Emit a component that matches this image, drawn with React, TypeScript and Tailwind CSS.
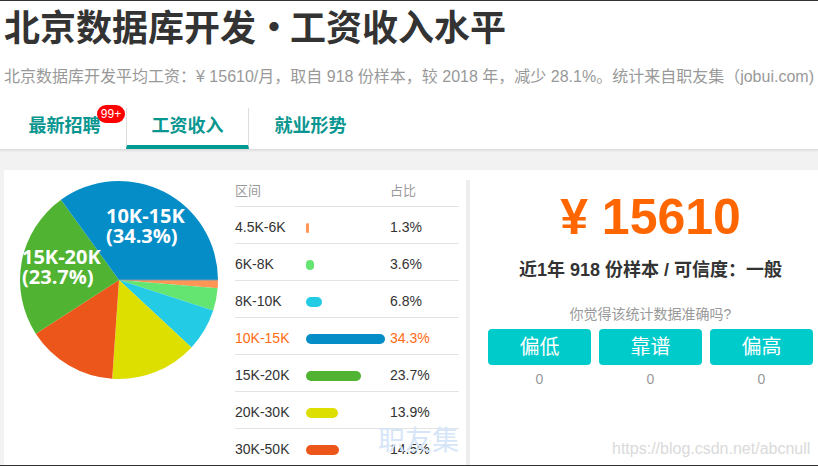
const slices = [
  { label: '4.5K-6K', pct: 1.3, color: '#ff9655' },
  { label: '6K-8K', pct: 3.6, color: '#64e572' },
  { label: '8K-10K', pct: 6.8, color: '#24cbe5' },
  { label: '20K-30K', pct: 13.9, color: '#dddf00' },
  { label: '30K-50K', pct: 14.5, color: '#ed561b' },
  { label: '15K-20K', pct: 23.7, color: '#50b432' },
  { label: '10K-15K', pct: 34.3, color: '#058dc7' },
];

const rows = [
  { label: '4.5K-6K', pct: 1.3, color: '#ff9655' },
  { label: '6K-8K', pct: 3.6, color: '#64e572' },
  { label: '8K-10K', pct: 6.8, color: '#24cbe5' },
  { label: '10K-15K', pct: 34.3, color: '#058dc7', hot: true },
  { label: '15K-20K', pct: 23.7, color: '#50b432' },
  { label: '20K-30K', pct: 13.9, color: '#dddf00' },
  { label: '30K-50K', pct: 14.5, color: '#ed561b' },
];

// 扇形パス（3時方向から時計回り）
function slicePath(start: number, end: number) {
  const r = 99;
  const c = 100;
  const a0 = (start * Math.PI) / 180;
  const a1 = (end * Math.PI) / 180;
  const x0 = c + r * Math.cos(a0);
  const y0 = c + r * Math.sin(a0);
  const x1 = c + r * Math.cos(a1);
  const y1 = c + r * Math.sin(a1);
  const large = end - start > 180 ? 1 : 0;
  return `M ${c} ${c} L ${x0} ${y0} A ${r} ${r} 0 ${large} 1 ${x1} ${y1} Z`;
}

function Pie() {
  const total = slices.reduce((s, d) => s + d.pct, 0);
  let acc = 0;
  return (
    <svg width="200" height="200" viewBox="0 0 200 200">
      {slices.map((d) => {
        const start = (acc / total) * 360;
        acc += d.pct;
        const end = (acc / total) * 360;
        return <path key={d.label} d={slicePath(start, end)} fill={d.color} />;
      })}
      <line x1="100" y1="100" x2="199" y2="100" stroke="#7f9aa8" strokeWidth="1" />
      <g
        fill="#ffffff"
        fontWeight="700"
        fontSize="20"
        fontFamily="'Open Sans', 'Noto Sans CJK SC', sans-serif"
      >
        <text x="87" y="43">10K-15K</text>
        <text x="87" y="63">(34.3%)</text>
        <text x="3" y="84">15K-20K</text>
        <text x="3" y="104">(23.7%)</text>
      </g>
    </svg>
  );
}

function SalaryTable() {
  return (
    <div className="w-[224px] mt-[10px] text-[14px]">
      <div className="flex h-[27px] items-center pb-[4px] border-b border-[#e3e3e3] text-[13px] text-[#999]">
        <span className="w-[155px]">区间</span>
        <span>占比</span>
      </div>
      {rows.map((r) => (
        <div
          key={r.label}
          className={`flex h-[37px] items-center pt-[5px] border-b border-[#e3e3e3] ${
            r.hot ? 'text-[#ff6a13]' : 'text-[#333]'
          }`}
        >
          <span className="w-[71px] whitespace-nowrap">{r.label}</span>
          <span className="w-[84px]">
            <span
              className="block h-[10px] rounded-full"
              style={{ width: Math.max(r.pct * 2.3, 3), background: r.color }}
            />
          </span>
          <span>{r.pct}%</span>
        </div>
      ))}
    </div>
  );
}

function Tab({ label, active, badge }: { label: string; active?: boolean; badge?: string }) {
  return (
    <div
      className={`relative w-[123px] h-[41px] text-center text-[18px] font-bold leading-[37px] text-[#0a9690] ${
        active ? 'border-x border-[#dddddd] border-b-4 border-b-[#009a93]' : ''
      }`}
    >
      {label}
      {badge && (
        <span className="absolute left-[94px] top-[-3px] flex h-[18px] w-[28px] items-center justify-center rounded-full bg-[#ff0000] text-[12px] font-normal leading-none text-white">
          {badge}
        </span>
      )}
    </div>
  );
}

function Vote({ label }: { label: string }) {
  return (
    <div className="flex w-[103px] flex-col items-center">
      <button className="h-[36px] w-full rounded-[4px] bg-[#00cbcb] text-[20px] text-white">
        {label}
      </button>
      <span className="mt-[4px] text-[14px] leading-[20px] text-[#999]">0</span>
    </div>
  );
}

export default function App() {
  return (
    <div className="relative h-[466px] w-[818px] overflow-hidden border-y border-[#333] bg-[#f2f2f2] font-['Liberation_Sans','Noto_Sans_CJK_SC',sans-serif]">
      <div className="bg-white border-b border-[#dddddd] shadow-[0_1px_2px_rgba(0,0,0,0.08)]">
        <h1 className="pl-[4px] text-[36px] font-bold leading-[48px] text-[#333] whitespace-nowrap font-['Noto_Sans_CJK_SC',sans-serif]">
          北京数据库开发<span className="inline-block w-[34px] text-center">•</span>工资收入水平
        </h1>
        <p className="mt-[16px] pl-[4px] text-[16px] leading-[24px] text-[#999] whitespace-nowrap">
          北京数据库开发平均工资：¥ 15610/月，取自 918 份样本，较 2018 年，减少 28.1%。统计来自职友集（jobui.com)
        </p>
        <div className="mt-[19px] flex pl-[3px]">
          <Tab label="最新招聘" badge="99+" />
          <Tab label="工资收入" active />
          <Tab label="就业形势" />
        </div>
      </div>

      <div className="ml-[4px] mt-[20px] flex bg-white h-[300px]">
        <div className="relative flex w-[462px]">
          <div className="w-[231px] pl-[15px] pt-[10px]">
            <Pie />
          </div>
          <SalaryTable />
          <span className="absolute left-[374px] top-[255px] text-[27px] leading-none text-[#d6e6f8] font-['Noto_Sans_CJK_SC',sans-serif]">
            职友集
          </span>
        </div>
        <div className="mt-[10px] flex-1 border-l-4 border-[#eeeeee] pl-[18px] pr-[5px]">
          <div className="pt-[7px] text-center text-[50px] font-bold leading-[60px] text-[#ff6600]">
            ¥ 15610
          </div>
          <div className="mt-[11px] text-center text-[18px] font-bold leading-[24px] text-[#333]">
            近1年 918 份样本 / 可信度：一般
          </div>
          <div className="mt-[22px] text-center text-[14px] leading-[20px] text-[#999]">
            你觉得该统计数据准确吗?
          </div>
          <div className="mt-[5px] flex justify-between">
            <Vote label="偏低" />
            <Vote label="靠谱" />
            <Vote label="偏高" />
          </div>
        </div>
      </div>

      <span className="absolute left-[612px] top-[438px] text-[16px] leading-[20px] text-[#dadada]">
        https://blog.csdn.net/abcnull
      </span>
    </div>
  );
}
